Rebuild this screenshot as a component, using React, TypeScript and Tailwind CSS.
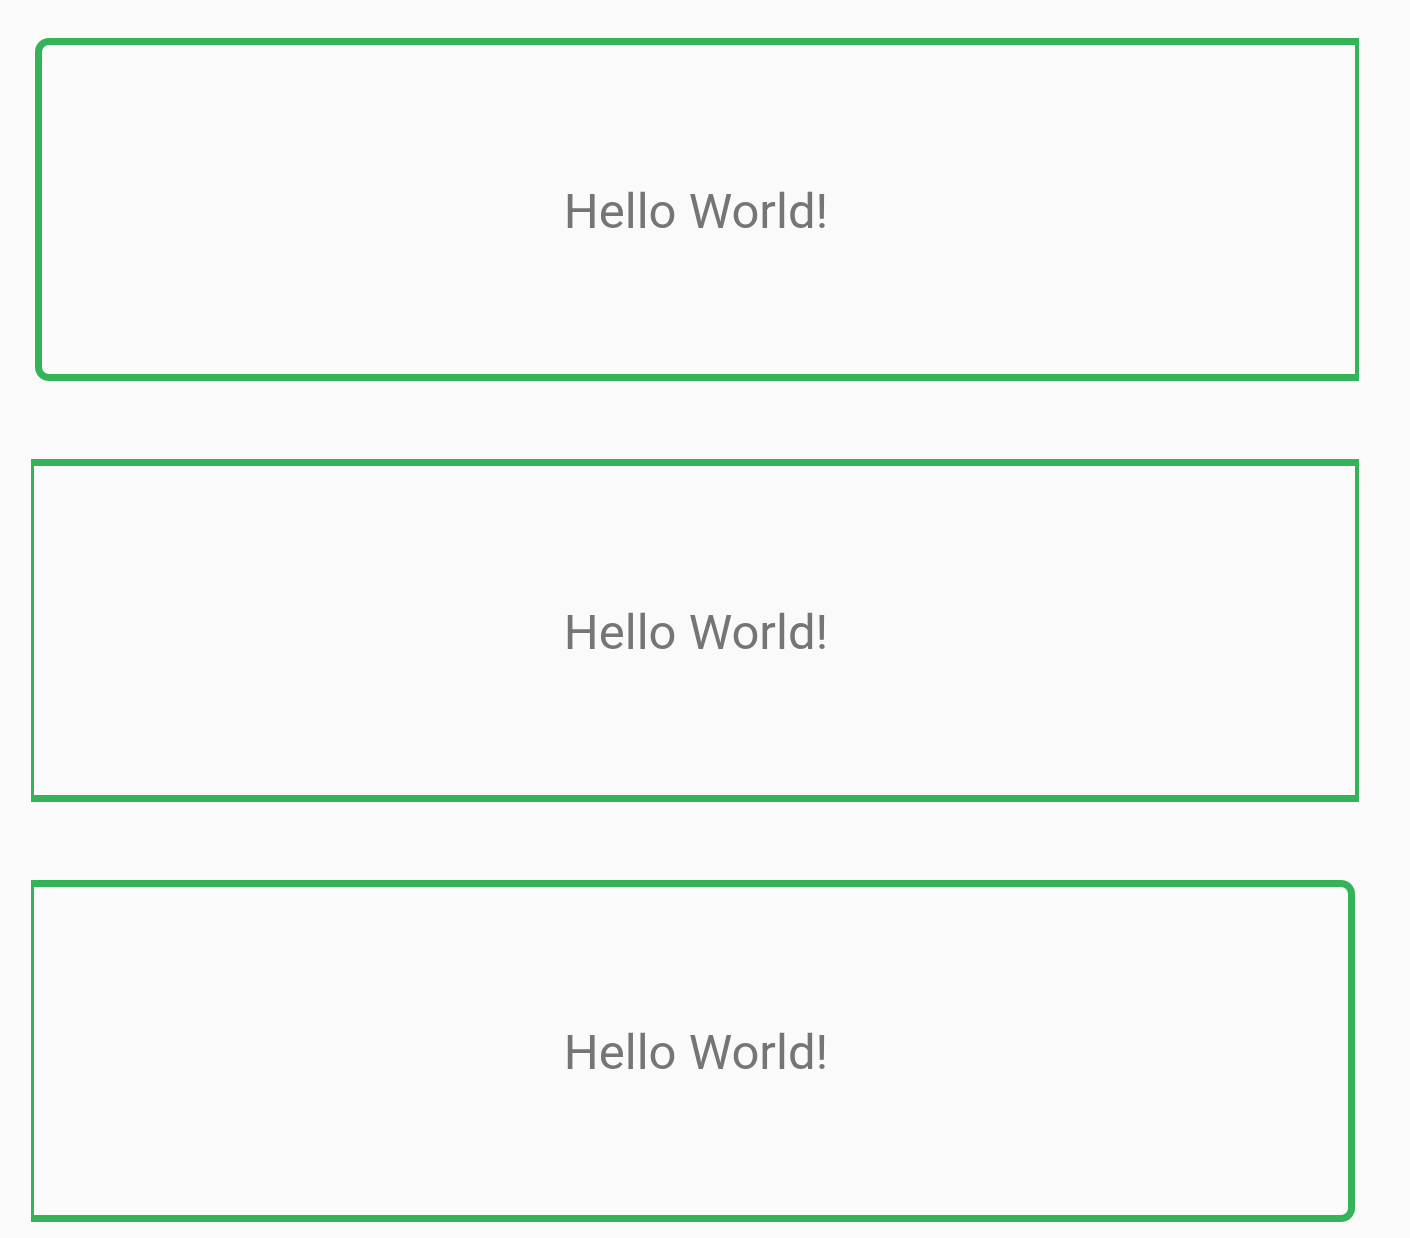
export default function App() {
  return (
    <div className="min-h-[1238px] w-[1410px] bg-[#fafafa] pt-[38px] flex flex-col gap-[78px]">
      {/* Rounded on the left */}
      <div className="ml-[35px] w-[1324px] h-[343px] pt-[4px] pr-[5px] flex items-center justify-center border-[#34b359] border-t-[7px] border-b-[7px] border-l-[7px] border-r-[4px] rounded-l-[14px]">
        <span className="text-[49px] text-[#757575] font-['Roboto',sans-serif]">Hello World!</span>
      </div>
      {/* Square */}
      <div className="ml-[31px] w-[1328px] h-[343px] pt-[4px] pl-[3px] flex items-center justify-center border-[#34b359] border-t-[7px] border-b-[7px] border-l-[3px] border-r-[4px]">
        <span className="text-[49px] text-[#757575] font-['Roboto',sans-serif]">Hello World!</span>
      </div>
      {/* Rounded on the right */}
      <div className="ml-[31px] w-[1324px] h-[342px] pt-[4px] pl-[10px] flex items-center justify-center border-[#34b359] border-t-[7px] border-b-[7px] border-l-[3px] border-r-[7px] rounded-r-[14px]">
        <span className="text-[49px] text-[#757575] font-['Roboto',sans-serif]">Hello World!</span>
      </div>
    </div>
  );
}
